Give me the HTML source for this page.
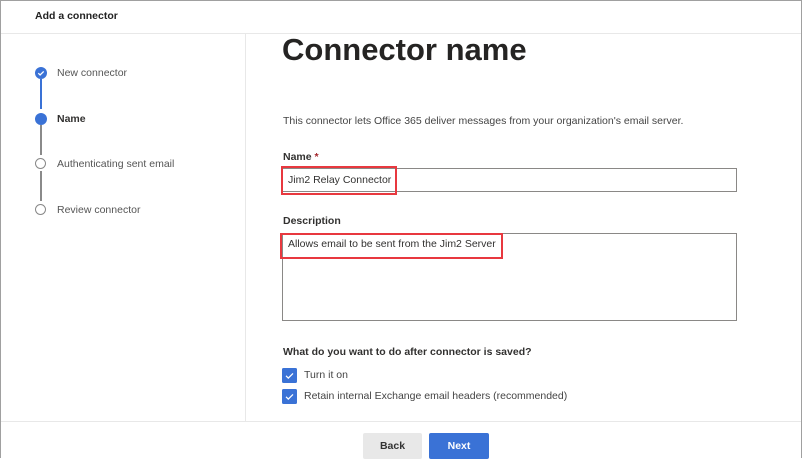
<!DOCTYPE html><html><head><style>
body{margin:0;width:802px;height:459px;overflow:hidden;background:#fff;font-family:"Liberation Sans",sans-serif;color:#323130;position:relative}
.a{position:absolute}
.t{font-size:10.5px;white-space:nowrap}
</style></head><body>
<div class="a" style="left:0;top:0;width:800px;height:457px;border:1px solid #a0a0a0;border-bottom:none"></div>
<div class="a t" style="left:35px;top:10px;font-weight:bold;color:#222">Add a connector</div>
<div class="a" style="left:1px;top:33px;width:800px;height:1px;background:#e8e8e8"></div>
<div class="a" style="left:245px;top:34px;width:1px;height:387px;background:#e8e8e8"></div>
<div class="a" style="left:1px;top:421px;width:800px;height:1px;background:#e8e8e8"></div>
<div class="a" style="left:40px;top:79px;width:2px;height:30px;background:#3a72d6"></div>
<div class="a" style="left:40px;top:125px;width:2px;height:30px;background:#8a8a8a"></div>
<div class="a" style="left:40px;top:171px;width:2px;height:30px;background:#8a8a8a"></div>
<svg class="a" style="left:35px;top:67px" width="12" height="12"><circle cx="6" cy="6" r="6" fill="#3a72d6"/><path d="M3.3 6.2l1.8 1.8 3.6-3.6" stroke="#fff" stroke-width="1.3" fill="none"/></svg>
<div class="a" style="left:35px;top:113px;width:12px;height:12px;border-radius:50%;background:#3a72d6"></div>
<div class="a" style="left:35px;top:158px;width:9px;height:9px;border-radius:50%;border:1.5px solid #888"></div>
<div class="a" style="left:35px;top:204px;width:9px;height:9px;border-radius:50%;border:1.5px solid #888"></div>
<div class="a t" style="left:57px;top:67px;color:#555">New connector</div>
<div class="a t" style="left:57px;top:113px;font-weight:bold">Name</div>
<div class="a t" style="left:57px;top:158px;color:#555">Authenticating sent email</div>
<div class="a t" style="left:57px;top:204px;color:#555">Review connector</div>
<div class="a" style="left:282px;top:32px;font-size:31px;font-weight:bold;color:#252423">Connector name</div>
<div class="a t" style="left:283px;top:115px;color:#444">This connector lets Office 365 deliver messages from your organization's email server.</div>
<div class="a t" style="left:283px;top:151px;font-weight:bold">Name <span style="color:#a4262c">*</span></div>
<div class="a" style="left:282px;top:168px;width:453px;height:22px;border:1px solid #8a8886"></div>
<div class="a" style="left:281px;top:166px;width:112px;height:25px;border:2px solid #e8383f"></div>
<div class="a t" style="left:288px;top:174px">Jim2 Relay Connector</div>
<div class="a t" style="left:283px;top:215px;font-weight:bold">Description</div>
<div class="a" style="left:282px;top:233px;width:453px;height:86px;border:1px solid #8a8886"></div>
<div class="a" style="left:280px;top:233px;width:219px;height:22px;border:2px solid #e8383f"></div>
<div class="a t" style="left:288px;top:238px">Allows email to be sent from the Jim2 Server</div>
<div class="a t" style="left:283px;top:346px;font-weight:bold">What do you want to do after connector is saved?</div>
<svg class="a" style="left:282px;top:368px" width="15" height="15"><rect width="15" height="15" rx="1.5" fill="#3a72d6"/><path d="M4 7.8l2.3 2.3 4.7-4.7" stroke="#fff" stroke-width="1.2" fill="none"/></svg>
<svg class="a" style="left:282px;top:389px" width="15" height="15"><rect width="15" height="15" rx="1.5" fill="#3a72d6"/><path d="M4 7.8l2.3 2.3 4.7-4.7" stroke="#fff" stroke-width="1.2" fill="none"/></svg>
<div class="a t" style="left:304px;top:369px;color:#444">Turn it on</div>
<div class="a t" style="left:304px;top:390px;color:#444">Retain internal Exchange email headers (recommended)</div>
<div class="a t" style="left:363px;top:433px;width:59px;height:26px;background:#e8e8e8;text-align:center;line-height:26px;font-weight:bold;color:#333;border-radius:2px">Back</div>
<div class="a t" style="left:429px;top:433px;width:60px;height:26px;background:#3a72d6;text-align:center;line-height:26px;font-weight:bold;color:#fff;border-radius:2px">Next</div>
</body></html>
